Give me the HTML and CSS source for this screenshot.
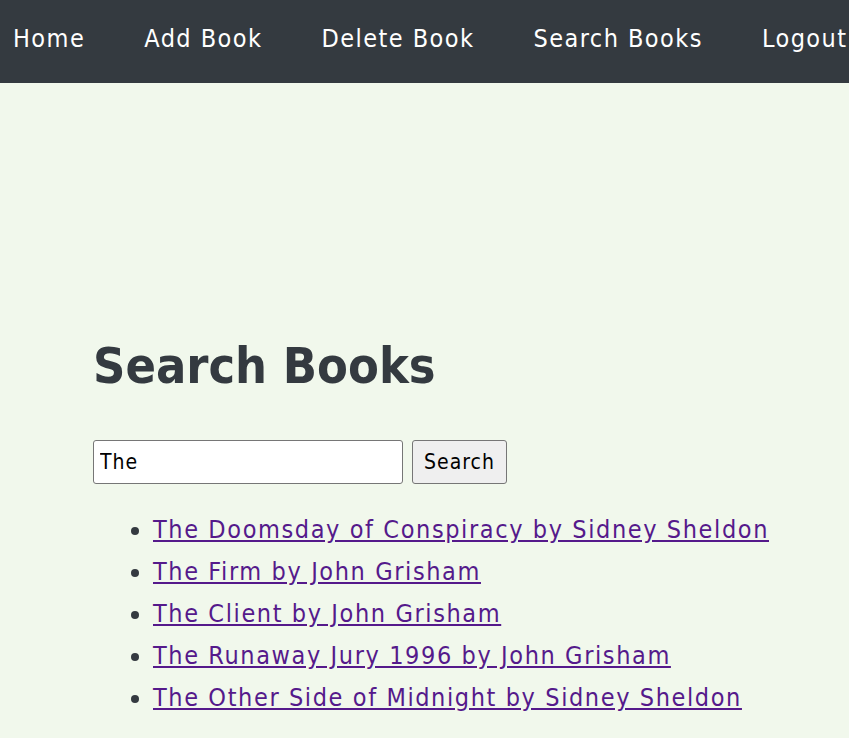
FILE: index.html
```html
<!DOCTYPE html>
<html lang="en">
<head>
<meta charset="utf-8">
<title>Search Books</title>
<link rel="stylesheet" href="styles.css">
</head>
<body>
<nav class="topnav">
  <a href="#" class="nav-link">Home</a>
  <a href="#" class="nav-link">Add Book</a>
  <a href="#" class="nav-link">Delete Book</a>
  <a href="#" class="nav-link">Search Books</a>
  <a href="#" class="nav-link">Logout</a>
</nav>
<main class="content">
  <h1 class="title">Search Books</h1>
  <form class="search-form">
    <input class="search-input" type="text" value="The">
    <button class="search-btn" type="button">Search</button>
  </form>
  <ul class="results">
    <li><a href="#" class="result-link">The Doomsday of Conspiracy by Sidney Sheldon</a></li>
    <li><a href="#" class="result-link">The Firm by John Grisham</a></li>
    <li><a href="#" class="result-link">The Client by John Grisham</a></li>
    <li><a href="#" class="result-link">The Runaway Jury 1996 by John Grisham</a></li>
    <li><a href="#" class="result-link">The Other Side of Midnight by Sidney Sheldon</a></li>
  </ul>
</main>
</body>
</html>
```

FILE: styles.css
```css
html, body {
  margin: 0;
  padding: 0;
}
body {
  background: #f1f8ec;
  color: #343a40;
  font-family: "DejaVu Sans Condensed", "DejaVu Sans", sans-serif;
  font-stretch: condensed;
  overflow: hidden;
}
.topnav {
  display: flex;
  align-items: center;
  gap: 59px;
  height: 83px;
  padding-left: 13px;
  background: #343a40;
  white-space: nowrap;
  overflow: hidden;
}
.nav-link {
  color: #ffffff;
  text-decoration: none;
  font-size: 25px;
  letter-spacing: 1.45px;
  padding-bottom: 6px;
}
.content {
  padding: 254px 0 0 93px;
}
.title {
  margin: 0;
  font-size: 50px;
  font-weight: bold;
  line-height: 58px;
}
.search-form {
  display: flex;
  gap: 9px;
  margin-top: 45px;
}
.search-input {
  box-sizing: border-box;
  width: 310px;
  height: 44px;
  padding: 0 6px;
  font-family: "DejaVu Sans Condensed", "DejaVu Sans", sans-serif;
  font-stretch: condensed;
  font-size: 21px;
  letter-spacing: 1px;
  color: #000;
  background: #fff;
  border: 1px solid #767676;
  border-radius: 3px;
}
.search-btn {
  box-sizing: border-box;
  width: 95px;
  height: 44px;
  padding: 0;
  font-family: "DejaVu Sans Condensed", "DejaVu Sans", sans-serif;
  font-stretch: condensed;
  font-size: 21px;
  letter-spacing: 1px;
  color: #000;
  background: #efefef;
  border: 1px solid #767676;
  border-radius: 3px;
}
.results {
  margin: 25px 0 0;
  padding-left: 60px;
  font-size: 25px;
  line-height: 42px;
}
.result-link {
  color: #551a8b;
  letter-spacing: 1.6px;
}
```
